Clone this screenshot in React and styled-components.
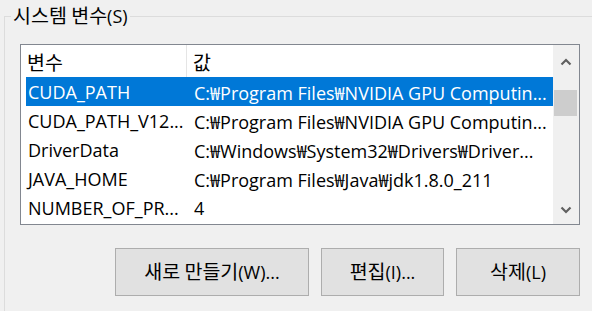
import React from "react";
import styled, { createGlobalStyle } from "styled-components";

const Global = createGlobalStyle`
  html, body { margin: 0; padding: 0; }
  body {
    width: 592px;
    height: 311px;
    overflow: hidden;
    background: #f0f0f0;
    font-family: "Open Sans", "Noto Sans CJK KR", sans-serif;
    font-size: 18px;
    color: #000;
  }
`;

const Ko = styled.span`
  font-family: "Noto Sans CJK KR", sans-serif;
  font-size: 19.5px;
  line-height: 1;
`;

const Group = styled.fieldset`
  margin: 4px 0 0 4px;
  padding: 0;
  border: none;
  border-top: 1px solid #dcdcdc;
  border-left: 1px solid #dcdcdc;
  height: 307px;
  box-sizing: border-box;
`;

const Legend = styled.legend`
  margin-left: 6px;
  padding: 0 2px;
  line-height: 24px;
  font-size: 18px;
  white-space: nowrap;
`;

const Content = styled.div`
  padding: 16px 12px 0 15px;
  display: flex;
  flex-direction: column;
`;

const ListBox = styled.div`
  width: 560px;
  height: 181px;
  box-sizing: border-box;
  border: 1px solid #828790;
  background: #fff;
  display: flex;
`;

const Table = styled.div`
  flex: 1;
  display: flex;
  flex-direction: column;
  overflow: hidden;
`;

const HeaderRow = styled.div`
  height: 32px;
  display: flex;
  align-items: center;
  flex-shrink: 0;
`;

const HeaderCell = styled.div`
  width: ${(p) => p.$w}px;
  flex-shrink: 0;
  box-sizing: border-box;
  height: 100%;
  display: flex;
  align-items: center;
  padding-left: ${(p) => p.$pad}px;
  padding-top: 2px;
  border-right: ${(p) => (p.$sep ? "1px solid #e5e5e5" : "none")};
`;

const Row = styled.div`
  height: 29px;
  flex-shrink: 0;
  margin-left: 5px;
  display: flex;
  align-items: center;
  background: ${(p) => (p.$selected ? "#0078d7" : "transparent")};
  color: ${(p) => (p.$selected ? "#fff" : "#000")};
  white-space: nowrap;
`;

const Cell = styled.div`
  width: ${(p) => (p.$w ? `${p.$w}px` : "auto")};
  flex: ${(p) => (p.$w ? "0 0 auto" : "1")};
  padding-left: ${(p) => p.$pad}px;
  box-sizing: border-box;
  overflow: hidden;
  white-space: nowrap;
`;

const ScrollBar = styled.div`
  width: 26px;
  flex-shrink: 0;
  background: #f0f0f0;
  display: flex;
  flex-direction: column;
`;

const ArrowButton = styled.div`
  height: ${(p) => p.$h}px;
  display: flex;
  align-items: center;
  justify-content: center;
  flex-shrink: 0;
`;

const Track = styled.div`
  flex: 1;
  display: flex;
  flex-direction: column;
`;

const Thumb = styled.div`
  margin: 0 2px 0 1px;
  height: 26px;
  background: #cdcdcd;
`;

const ButtonRow = styled.div`
  margin-top: 23px;
  width: 560px;
  display: flex;
  justify-content: flex-end;
  gap: 12px;
`;

const Button = styled.button`
  width: ${(p) => p.$w}px;
  height: 48px;
  box-sizing: border-box;
  background: #e1e1e1;
  border: 1px solid #adadad;
  font-family: inherit;
  font-size: 18px;
  color: #000;
  padding: 0;
  margin: 0;
`;

const Chevron = ({ up }) => (
  <svg width="12" height="8" viewBox="0 0 12 8">
    <path
      d={up ? "M1.5 6.5 L6 2 L10.5 6.5" : "M1.5 1.5 L6 6 L10.5 1.5"}
      fill="none"
      stroke="#606060"
      strokeWidth="2.2"
    />
  </svg>
);

const rows = [
  ["CUDA_PATH", "C:₩Program Files₩NVIDIA GPU Computin..."],
  ["CUDA_PATH_V12...", "C:₩Program Files₩NVIDIA GPU Computin..."],
  ["DriverData", "C:₩Windows₩System32₩Drivers₩Driver..."],
  ["JAVA_HOME", "C:₩Program Files₩Java₩jdk1.8.0_211"],
  ["NUMBER_OF_PR...", "4"],
];

export default function App() {
  return (
    <>
      <Global />
      <Group>
        <Legend>
          <Ko>시스템 변수</Ko>(S)
        </Legend>
        <Content>
          <ListBox>
            <Table>
              <HeaderRow>
                <HeaderCell $w={166} $pad={6} $sep>
                  <Ko>변수</Ko>
                </HeaderCell>
                <HeaderCell $w={200} $pad={6}>
                  <Ko>값</Ko>
                </HeaderCell>
              </HeaderRow>
              {rows.map(([k, v], i) => (
                <Row key={k} $selected={i === 0}>
                  <Cell $w={161} $pad={2}>
                    {k}
                  </Cell>
                  <Cell $pad={7}>{v}</Cell>
                </Row>
              ))}
            </Table>
            <ScrollBar>
              <ArrowButton $h={34}>
                <Chevron up />
              </ArrowButton>
              <Track>
                <div style={{ height: 11 }} />
                <Thumb />
              </Track>
              <ArrowButton $h={28}>
                <Chevron />
              </ArrowButton>
            </ScrollBar>
          </ListBox>
          <ButtonRow>
            <Button $w={194}>
              <Ko>새로 만들기</Ko>(W)...
            </Button>
            <Button $w={123}>
              <Ko>편집</Ko>(I)...
            </Button>
            <Button $w={124}>
              <Ko>삭제</Ko>(L)
            </Button>
          </ButtonRow>
        </Content>
      </Group>
    </>
  );
}
